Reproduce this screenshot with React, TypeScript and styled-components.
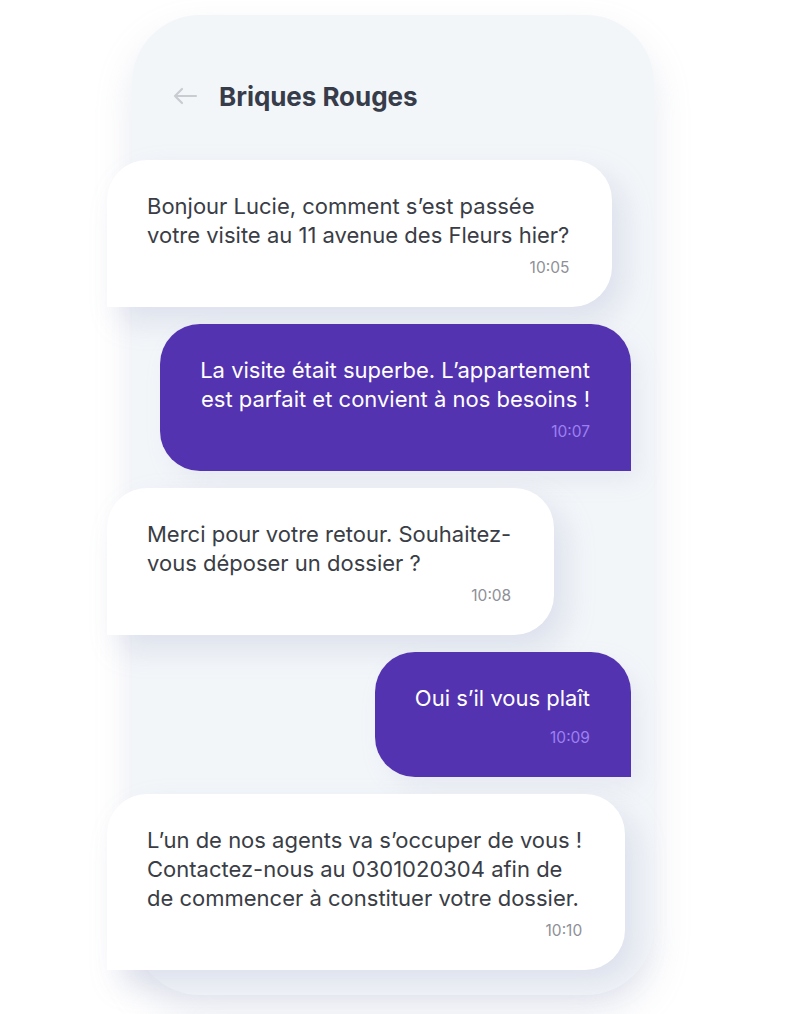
import React from 'react';
import styled, { createGlobalStyle } from 'styled-components';

type Side = 'in' | 'out';

interface Msg {
  side: Side;
  lines: string[];
  time: string;
}

const messages: Msg[] = [
  {
    side: 'in',
    lines: ['Bonjour Lucie, comment s’est passée', 'votre visite au 11 avenue des Fleurs hier?'],
    time: '10:05',
  },
  {
    side: 'out',
    lines: ['La visite était superbe. L’appartement', 'est parfait et convient à nos besoins !'],
    time: '10:07',
  },
  {
    side: 'in',
    lines: ['Merci pour votre retour. Souhaitez-', 'vous déposer un dossier ?'],
    time: '10:08',
  },
  {
    side: 'out',
    lines: ['Oui s’il vous plaît'],
    time: '10:09',
  },
  {
    side: 'in',
    lines: [
      'L’un de nos agents va s’occuper de vous !',
      'Contactez-nous au 0301020304 afin de',
      'de commencer à constituer votre dossier.',
    ],
    time: '10:10',
  },
];

function BackArrow() {
  return (
    <svg width="26" height="20" viewBox="0 0 26 20" fill="none">
      <path
        d="M24 10H3M10 3L3 10L10 17"
        stroke="#c9ccd3"
        strokeWidth="2.2"
        strokeLinecap="round"
        strokeLinejoin="round"
      />
    </svg>
  );
}

function App() {
  return (
    <>
      <GlobalStyle />
      <Page>
        <Phone>
          <Header>
            <BackArrow />
            <Title>Briques Rouges</Title>
          </Header>

          <Thread>
            {messages.map((m) => (
              <Bubble key={m.time} side={m.side}>
                <Text>
                  {m.lines.map((l) => (
                    <span key={l}>{l}</span>
                  ))}
                </Text>
                <Time side={m.side}>{m.time}</Time>
              </Bubble>
            ))}
          </Thread>
        </Phone>
      </Page>
    </>
  );
}

const GlobalStyle = createGlobalStyle`
  html, body {
    margin: 0;
    padding: 0;
    background: #ffffff;
  }
  body {
    font-family: Inter, "Open Sans", "Liberation Sans", sans-serif;
    -webkit-font-smoothing: antialiased;
  }
`;

const Page = styled.div`
  width: 786px;
  height: 1014px;
  display: flex;
  justify-content: center;
  padding-top: 15px;
  box-sizing: border-box;
  overflow: hidden;
`;

const Phone = styled.div`
  width: 522px;
  height: 980px;
  box-sizing: border-box;
  background: #f3f6f9;
  border-radius: 68px;
  box-shadow: 0 18px 36px rgba(160, 168, 196, 0.24);
  display: flex;
  flex-direction: column;
`;

const Header = styled.div`
  height: 145px;
  display: flex;
  align-items: center;
  gap: 21px;
  padding: 17px 0 0 40px;
  box-sizing: border-box;
`;

const Title = styled.h1`
  margin: 0;
  font-size: 26px;
  font-weight: 700;
  color: #373c4b;
  letter-spacing: -0.05px;
`;

const Thread = styled.div`
  display: flex;
  flex-direction: column;
  gap: 17px;
  margin-left: -25px;
  margin-right: 23px;
`;

const Bubble = styled.div<{ side: Side }>`
  align-self: ${(p) => (p.side === 'in' ? 'flex-start' : 'flex-end')};
  min-height: 125px;
  box-sizing: border-box;
  display: flex;
  flex-direction: column;
  justify-content: space-between;
  padding: ${(p) => (p.side === 'in' ? '32px 43px 30px 40px' : '32px 41px 30px 40px')};
  background: ${(p) => (p.side === 'in' ? '#ffffff' : '#5433b0')};
  color: ${(p) => (p.side === 'in' ? '#3a3d45' : '#ffffff')};
  text-align: ${(p) => (p.side === 'in' ? 'left' : 'right')};
  border-radius: ${(p) => (p.side === 'in' ? '40px 40px 40px 0' : '40px 40px 0 40px')};
  box-shadow: ${(p) =>
    p.side === 'in'
      ? '12px 14px 30px rgba(140, 150, 190, 0.22)'
      : '8px 10px 24px rgba(140, 150, 190, 0.12)'};
`;

const Text = styled.div`
  display: flex;
  flex-direction: column;
  font-size: 22px;
  line-height: 29px;
  white-space: nowrap;
`;

const Time = styled.div<{ side: Side }>`
  margin-top: 9px;
  text-align: right;
  font-size: 15.5px;
  line-height: 18px;
  color: ${(p) => (p.side === 'in' ? '#8e9097' : '#9c80f2')};
`;

export default App;
